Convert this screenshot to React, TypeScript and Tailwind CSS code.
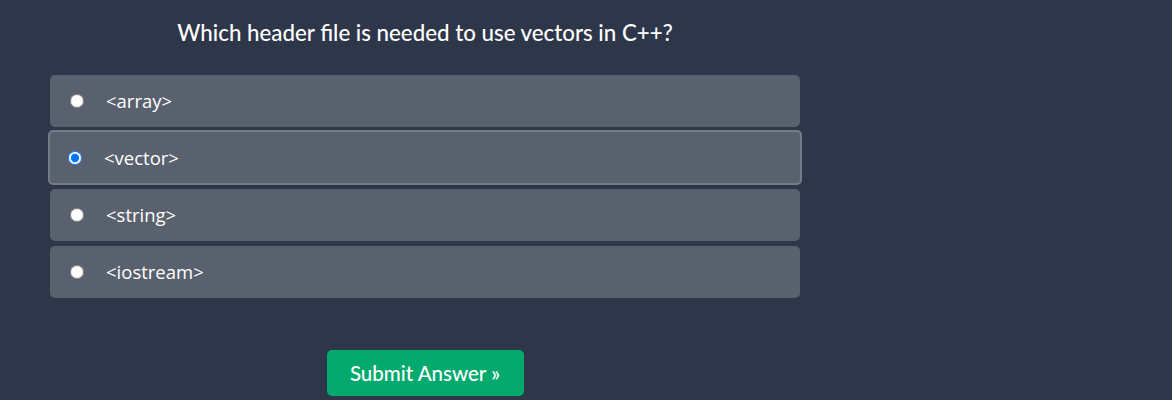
import React, { useState } from "react";

const options = ["<array>", "<vector>", "<string>", "<iostream>"];

export default function App() {
  const [picked, setPicked] = useState(1);

  return (
    <div className="min-h-[400px] w-full bg-[#2e3649] font-['Open_Sans',sans-serif] text-white">
      <div className="w-[750px] ml-[50px]">
        {/* Question */}
        <h2 className="pt-[17px] h-[75px] text-center text-[22.3px] leading-[32px] font-medium font-['Lato','Open_Sans',sans-serif]">
          Which header file is needed to use vectors in C++?
        </h2>

        {/* Answers */}
        <div className="flex flex-col gap-[5px]">
          {options.map((opt, i) => {
            const active = picked === i;
            return (
              <label
                key={opt}
                className={`flex items-center rounded-[5px] bg-[#5a616e] cursor-pointer ${
                  active
                    ? "-mx-[2px] -mt-[2px] -mb-[1px] h-[55px] border-2 border-[#737a88] pl-[18px]"
                    : "h-[52px] pl-[20px]"
                }`}
              >
                <input
                  type="radio"
                  name="quiz"
                  checked={active}
                  onChange={() => setPicked(i)}
                  className="w-[14px] h-[14px] m-0"
                />
                <span className="ml-[22px] text-[18.5px] text-white">{opt}</span>
              </label>
            );
          })}
        </div>

        {/* Submit */}
        <div className="flex justify-center mt-[52px]">
          <button className="w-[197px] h-[46px] rounded-[5px] bg-[#04aa6d] text-white text-[20.5px] font-['Lato','Open_Sans',sans-serif] font-medium">
            Submit Answer &raquo;
          </button>
        </div>
      </div>
    </div>
  );
}
